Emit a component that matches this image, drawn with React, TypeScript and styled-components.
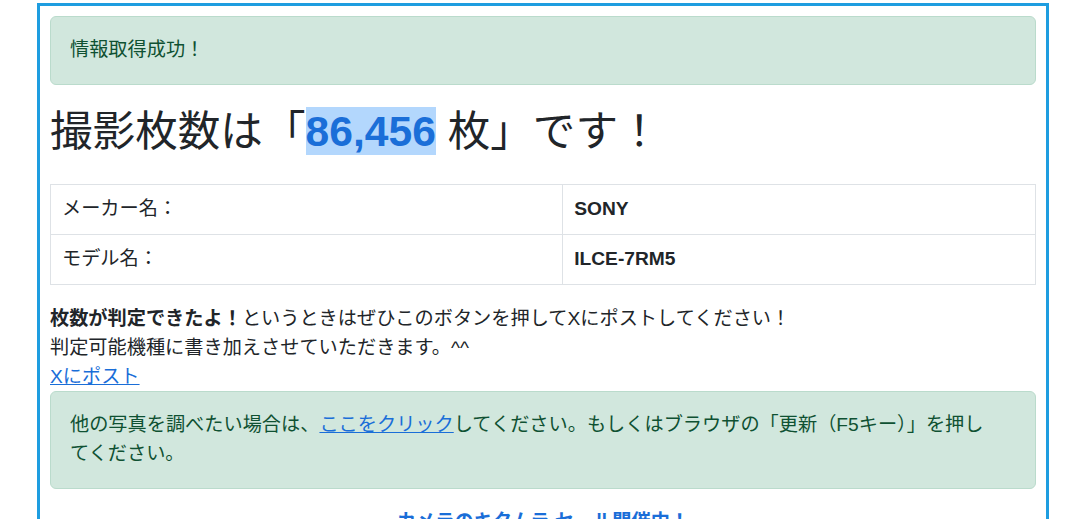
import React from "react";
import styled, { createGlobalStyle } from "styled-components";

const GlobalStyle = createGlobalStyle`
  html, body {
    margin: 0;
    padding: 0;
    background: #fff;
  }
  body {
    font-family: "Liberation Sans", "Noto Sans CJK JP", sans-serif;
    font-size: 19.2px;
    line-height: 1.5;
    color: #212529;
  }
  * { box-sizing: border-box; }
`;

const Frame = styled.div`
  width: 1012px;
  margin: 3px 0 0 37px;
  padding: 10px 10px 0;
  border: 3px solid #1e9de0;
  border-bottom: none;
  min-height: 520px;
`;

const Alert = styled.div`
  padding: 19px 19px 19.5px;
  margin-bottom: 19px;
  border: 1px solid #badbcc;
  border-radius: 6px;
  background: #d1e7dd;
  color: #0f5132;
`;

const Heading = styled.h1`
  margin: 21px 0 27px;
  font-size: 42.6px;
  font-weight: 400;
  line-height: 1.2;
  color: #212529;
`;

const Count = styled.span`
  font-weight: 700;
  color: #1a6ed8;
  background: #b3d7fd;
  font-family: "Liberation Sans", sans-serif;
`;

const InfoTable = styled.table`
  width: 100%;
  border-collapse: collapse;
  margin-bottom: 20px;
`;

const Cell = styled.td<{ $strong?: boolean }>`
  width: 52%;
  padding: 10px 11px;
  border: 1px solid #dee2e6;
  font-weight: ${(p) => (p.$strong ? 700 : 400)};
  vertical-align: middle;
`;

const Note = styled.p`
  margin: 0;
`;

const Link = styled.a`
  color: #1a6ed8;
  text-decoration: underline;
`;

const Banner = styled.div`
  margin-top: 4px;
  text-align: center;
  font-weight: 700;
  color: #1a6ed8;
`;

export default function App() {
  return (
    <>
      <GlobalStyle />
      <Frame>
        <Alert>情報取得成功！</Alert>
        <Heading>
          撮影枚数は「<Count>86,456</Count> 枚」です！
        </Heading>
        <InfoTable>
          <tbody>
            <tr>
              <Cell>メーカー名：</Cell>
              <Cell $strong>SONY</Cell>
            </tr>
            <tr>
              <Cell>モデル名：</Cell>
              <Cell $strong>ILCE-7RM5</Cell>
            </tr>
          </tbody>
        </InfoTable>
        <Note>
          <b>枚数が判定できたよ！</b>というときはぜひこのボタンを押してXにポストしてください！
          <br />
          判定可能機種に書き加えさせていただきます。^^
          <br />
          <Link href="#">Xにポスト</Link>
        </Note>
        <Alert>
          他の写真を調べたい場合は、<Link href="#">ここをクリック</Link>
          してください。もしくはブラウザの「更新（F5キー）」を押し
          <br />
          てください。
        </Alert>
        <Banner>カメラのキタムラ セール開催中！</Banner>
      </Frame>
    </>
  );
}
